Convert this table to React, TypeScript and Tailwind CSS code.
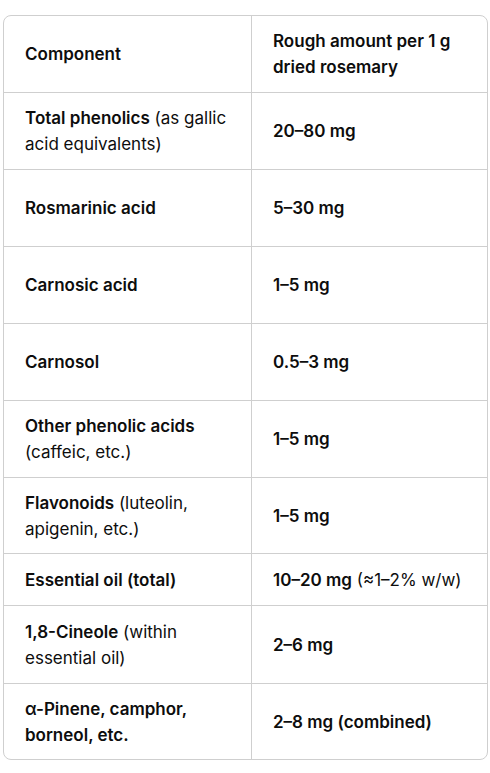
const rows: { name: React.ReactNode; amount: React.ReactNode; h: string }[] = [
  {
    name: (
      <>
        <b className="font-semibold">Total phenolics</b> (as gallic acid equivalents)
      </>
    ),
    amount: <b className="font-semibold">20–80 mg</b>,
    h: "h-[77px]",
  },
  { name: <b className="font-semibold">Rosmarinic acid</b>, amount: <b className="font-semibold">5–30 mg</b>, h: "h-[77px]" },
  { name: <b className="font-semibold">Carnosic acid</b>, amount: <b className="font-semibold">1–5 mg</b>, h: "h-[77px]" },
  { name: <b className="font-semibold">Carnosol</b>, amount: <b className="font-semibold">0.5–3 mg</b>, h: "h-[77px]" },
  {
    name: (
      <>
        <b className="font-semibold">Other phenolic acids</b> (caffeic, etc.)
      </>
    ),
    amount: <b className="font-semibold">1–5 mg</b>,
    h: "h-[77px]",
  },
  {
    name: (
      <>
        <b className="font-semibold">Flavonoids</b> (luteolin, apigenin, etc.)
      </>
    ),
    amount: <b className="font-semibold">1–5 mg</b>,
    h: "h-[76px]",
  },
  {
    name: <b className="font-semibold">Essential oil (total)</b>,
    amount: (
      <>
        <b className="font-semibold">10–20 mg</b> (≈1–2% w/w)
      </>
    ),
    h: "h-[52px]",
  },
  {
    name: (
      <>
        <b className="font-semibold">1,8-Cineole</b> (within essential oil)
      </>
    ),
    amount: <b className="font-semibold">2–6 mg</b>,
    h: "h-[78px]",
  },
  {
    name: <b className="font-semibold">α-Pinene, camphor, borneol, etc.</b>,
    amount: <b className="font-semibold">2–8 mg (combined)</b>,
    h: "h-[75px]",
  },
];

export default function App() {
  return (
    <div className="min-h-screen bg-white pl-[3px] pt-[15px] font-['Inter',sans-serif] text-[17px] leading-[26px] text-[#0d0d0d]">
      <div className="w-[485px] overflow-hidden rounded-lg border border-[#cfcfcf]">
        {/* header */}
        <div className="grid h-[77px] grid-cols-[248px_1fr] border-b border-[#cfcfcf]">
          <div className="flex items-center border-r border-[#cfcfcf] pl-[21px] pr-4 font-semibold">
            Component
          </div>
          <div className="flex items-center pl-[21px] pr-3 font-semibold">
            <span>Rough amount per 1 g dried rosemary</span>
          </div>
        </div>
        {rows.map((r, i) => (
          <div
            key={i}
            className={`grid grid-cols-[248px_1fr] ${r.h} ${i < rows.length - 1 ? "border-b border-[#cfcfcf]" : ""}`}
          >
            <div className="flex items-center border-r border-[#cfcfcf] pl-[21px] pr-3">
              <span>{r.name}</span>
            </div>
            <div className="flex items-center pl-[21px] pr-3">
              <span>{r.amount}</span>
            </div>
          </div>
        ))}
      </div>
    </div>
  );
}
